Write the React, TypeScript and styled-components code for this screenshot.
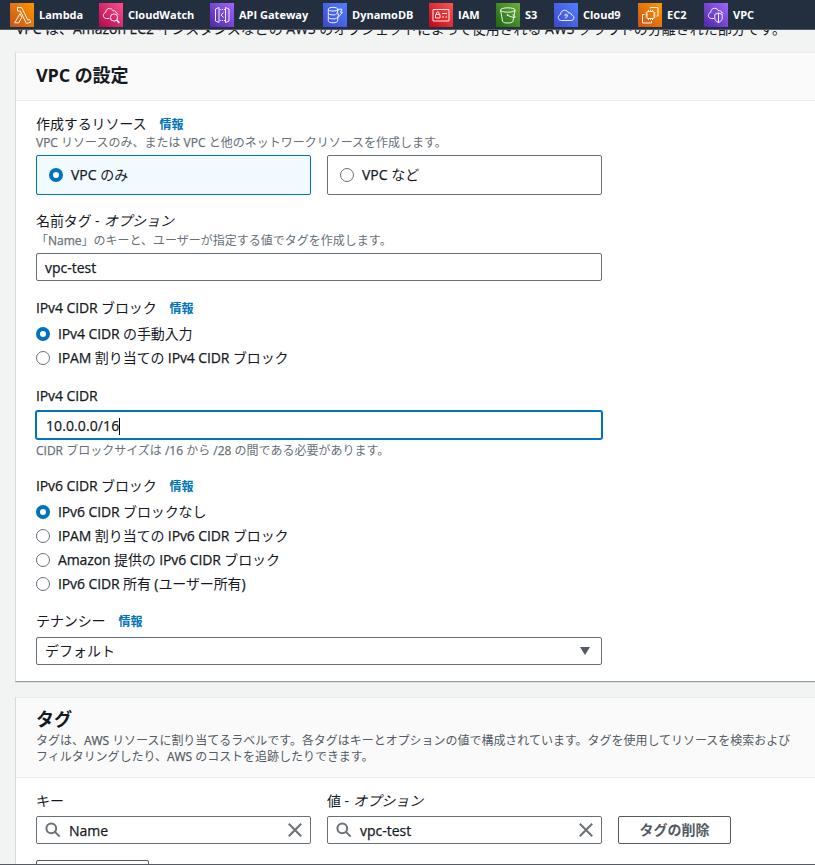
import React from "react";
import styled, { createGlobalStyle } from "styled-components";

const GlobalStyle = createGlobalStyle`
  * { box-sizing: border-box; }
  html, body { margin: 0; padding: 0; height: 100%; overflow: hidden; background: #f2f3f3; }
  body {
    font-family: "Open Sans", "Noto Sans CJK JP", sans-serif;
    font-size: 14px;
    font-weight: 400;
    line-height: 20px;
    letter-spacing: -0.11px;
    color: #16191f;
  }
`;

const Page = styled.div`
  display: flex;
  flex-direction: column;
  height: 865px;
  overflow: hidden;
  border-bottom: 1px solid #545b64;
`;

const ServiceBar = styled.nav`
  display: grid;
  grid-template-columns: 89px 111px 113px 106px 67px 58px 84px 66px 1fr;
  align-items: center;
  flex: none;
  height: 30px;
  padding-left: 10px;
  background: #232f3e;
  border-bottom: 1px solid #545b64;
`;

const Service = styled.a`
  display: flex;
  align-items: center;
  gap: 5px;
  height: 24px;
  color: #fff;
  font-size: 11px;
  font-weight: 700;
  line-height: 16px;
  letter-spacing: 0;
  white-space: nowrap;
`;

const ServiceIcon = styled.svg`
  flex: none;
  width: 24px;
  height: 24px;
  fill: none;
  stroke: #fff;
  stroke-width: 0.9;
  stroke-linejoin: round;
`;

const Content = styled.main`
  display: flex;
  flex-direction: column;
  flex: 1;
  min-height: 0;
  overflow: hidden;
  padding-left: 15px;
`;

const Intro = styled.p`
  flex: none;
  margin: -11px 0 13px 1px;
  height: 20px;
  white-space: nowrap;
  letter-spacing: -0.04px;
`;

const Panel = styled.section`
  flex: none;
  margin-bottom: 15px;
  background: #fff;
  border-left: 1px solid #d5dbdb;
  border-top: 1px solid #eaeded;
  border-bottom: 1px solid #959c9f;
  box-shadow: 0 1px 0 0 rgba(0, 28, 36, 0.08);
`;

const PanelHeader = styled.header<{ $height: number; $top: number }>`
  height: ${(p) => p.$height}px;
  padding: ${(p) => p.$top}px 20px 0;
  background: #fafafa;
  border-bottom: 1px solid #eaeded;
`;

const PanelTitle = styled.h2`
  margin: 0;
  height: 22px;
  font-size: 18px;
  font-weight: 700;
  line-height: 22px;
`;

const PanelText = styled.p`
  margin: 3px 0 0;
  color: #545b64;
  font-size: 12px;
  line-height: 16px;
  letter-spacing: -0.03px;
  white-space: nowrap;
`;

const PanelBody = styled.div`
  padding: 13px 20px 16px;
`;

const Field = styled.div<{ $gap: number }>`
  width: 566px;
  margin-bottom: ${(p) => p.$gap}px;
`;

const Label = styled.div`
  display: flex;
  align-items: center;
  height: 20px;
  white-space: pre;
`;

const LatinRun = styled.span`
  -webkit-text-stroke: 0.25px currentColor;
`;

const Optional = styled.i`
  margin-left: 1px;
  font-style: italic;
  letter-spacing: 0;
`;

const InfoLink = styled.a`
  margin-left: 13px;
  padding-top: 2px;
  color: #0073bb;
  font-size: 12px;
  font-weight: 700;
  letter-spacing: 0;
`;

const Hint = styled.div<{ $top?: number }>`
  height: 16px;
  margin-top: ${(p) => p.$top ?? 0}px;
  padding-top: 1px;
  color: #687078;
  font-size: 12px;
  line-height: 16px;
  letter-spacing: 0;
  white-space: nowrap;
`;

const Tiles = styled.div`
  display: grid;
  grid-template-columns: 1fr 1fr;
  gap: 16px;
  margin-top: 5px;
`;

const Tile = styled.label<{ $selected?: boolean }>`
  display: flex;
  align-items: center;
  gap: 8px;
  height: 40px;
  padding: 0 12px;
  border: 1px solid ${(p) => (p.$selected ? "#0073bb" : "#687078")};
  border-radius: 2px;
  background: ${(p) => (p.$selected ? "#f1faff" : "#fff")};
  letter-spacing: 0;
`;

const RadioDot = styled.span<{ $checked?: boolean }>`
  flex: none;
  width: 14px;
  height: 14px;
  border: ${(p) => (p.$checked ? "4px solid #0073bb" : "1px solid #687078")};
  border-radius: 50%;
  background: #fff;
`;

const RadioList = styled.div`
  display: grid;
  grid-auto-rows: 24px;
  margin-top: 4px;
`;

const RadioRow = styled.label`
  display: flex;
  align-items: center;
  gap: 8px;
`;

const Control = styled.div<{ $top: number; $focused?: boolean }>`
  display: flex;
  align-items: center;
  height: 28px;
  margin-top: ${(p) => p.$top}px;
  padding: 0 8px;
  border: 1px solid ${(p) => (p.$focused ? "#0073bb" : "#687078")};
  border-radius: 2px;
  box-shadow: ${(p) => (p.$focused ? "0 0 0 1px #0073bb" : "none")};
  background: #fff;
  letter-spacing: ${(p) => (p.$focused ? "0.1px" : "0")};
`;

const ControlText = styled.span<{ $drop?: number; $inset?: number }>`
  flex: 1;
  display: flex;
  align-items: center;
  padding-top: ${(p) => p.$drop ?? 0}px;
  padding-left: ${(p) => p.$inset ?? 0}px;
`;

const Caret = styled.span`
  width: 1px;
  height: 17px;
  background: #000;
`;

const Glyph = styled.svg<{ $right?: number }>`
  flex: none;
  margin-right: ${(p) => p.$right ?? 0}px;
  fill: none;
  stroke: #687078;
  stroke-width: 2;
`;

const TagRow = styled.div`
  display: grid;
  grid-template-columns: 275px 275px 113px;
  column-gap: 16px;
  align-items: end;
  margin-bottom: 16px;
`;

const Button = styled.button`
  width: 113px;
  height: 28px;
  padding: 0;
  border: 1px solid #545b64;
  border-radius: 2px;
  background: #fff;
  color: #545b64;
  font: inherit;
  font-weight: 700;
  letter-spacing: 0;
`;

type ServiceInfo = {
  name: string;
  from: string;
  to: string;
  art: React.ReactNode;
};

const ORANGE = ["#c8511b", "#ff9900"];
const PINK = ["#b0084d", "#ff4f8b"];
const PURPLE = ["#4d27a8", "#a166ff"];
const BLUE = ["#3b48cc", "#527fff"];
const RED = ["#bd0816", "#ff5252"];
const GREEN = ["#1b660f", "#6cae3e"];

const service = (name: string, c: string[], art: React.ReactNode): ServiceInfo => ({
  name,
  from: c[0],
  to: c[1],
  art,
});

const services: ServiceInfo[] = [
  service("Lambda", ORANGE, (
    <path d="M7.5 4.5h4.2l6 12.5 1.800-.7 1.200 3-4.300 1.200L10.300 8H7.500zM10 10.700l1.800 3.600-3 5.500H4.600z" />
  )),
  service("CloudWatch", PINK, (
    <>
      <path d="M10.500 15.500H7.600c-2 0-3.200-1.200-3.200-3 0-1.700 1-2.700 2.300-3-.2-2.200 1.500-4 3.700-4 2 0 3.200 1 3.900 2.600 1.500-.8 3 .2 3 2 1 .2 1.700.7 2 1.500" />
      <circle cx="15" cy="14.500" r="3.600" />
      <path d="M17.700 17.200l2.600 2.600" strokeWidth="1.800" />
    </>
  )),
  service("API Gateway", PURPLE, (
    <>
      <path d="M9 4.500L5.500 6v12L9 19.500zM15.500 4.500L19 6v12l-3.500 1.500zM13.500 9.500L11 12l2.500 2.500" />
      <path d="M9.500 6.500h6M9.500 17.500h6" strokeDasharray="1.200 1" />
    </>
  )),
  service("DynamoDB", BLUE, (
    <>
      <ellipse cx="10" cy="6.200" rx="4.700" ry="1.900" />
      <path d="M5.300 6.200v11.600c0 1.100 2.100 2 4.700 2s4.700-.9 4.700-2V15M14.700 6.200v2M5.300 10c0 1.100 2 1.900 4.700 1.900 1 0 1.900-.1 2.700-.4M5.300 14c0 1.100 2 1.900 4.700 1.900 1.500 0 2.800-.2 3.700-.7M15.500 6.200h3.500l-1.500 3h2l-5 6 1.200-4.300h-2z" />
    </>
  )),
  service("IAM", RED, (
    <>
      <rect x="4" y="6.500" width="16" height="11.500" />
      <rect x="6.500" y="11.500" width="4.500" height="3.500" />
      <path d="M7.500 11.500V10c0-1.500 2.500-1.500 2.500 0v1.500M13 10.500h5M13 14h2M16.500 14h1.500" />
    </>
  )),
  service("S3", GREEN, (
    <>
      <ellipse cx="11.800" cy="7" rx="7.300" ry="2.200" />
      <path d="M4.500 7l2.200 11.500c.6 2 9.600 2 10.200 0L19.100 7M11.500 12.200c3 1.500 6 2.500 7.500 2.200 1-.5-1-2-2.500-2.700" />
      <circle cx="11.500" cy="12" r=".5" />
    </>
  )),
  service("Cloud9", BLUE, (
    <>
      <path d="M7.500 17.500c-2 0-3.200-1.200-3.200-3 0-1.600 1-2.600 2.300-3-.2-2.500 1.700-4.300 4-4.300 2 0 3.400 1.100 4 2.900 1.500-.7 2.800.2 3 1.900 1.600.3 2.300 1.300 2.300 2.700 0 1.700-1.200 2.800-3 2.800z" />
      <path d="M13.500 12.200c0 1-3 1-3 0s3-1.800 3 0c0 1.800-.7 2.800-2.700 2.800" strokeWidth=".7" />
    </>
  )),
  service("EC2", ORANGE, (
    <>
      <rect x="9" y="8.500" width="7" height="7" rx=".6" />
      <path d="M10.500 8.500V7M12.500 8.500V7M14.500 8.500V7M10.500 17v-1.500M12.500 17v-1.500M14.500 17v-1.500M9 10H7.500M9 12H7.500M9 14H7.500M17.500 10H16M17.500 12H16M17.500 14H16M6.500 11.500h-2v8.500h9v-2M12.500 5.500v-1h7.500v8.500h-1.500" />
    </>
  )),
  service("VPC", PURPLE, (
    <>
      <path d="M10 15.500H7.700c-2 0-3.300-1.200-3.300-3 0-1.700 1-2.700 2.300-3-.2-2.400 1.600-4.200 3.900-4.200 2 0 3.200 1 3.900 2.600 1.500-.8 2.800.1 3 1.700 1 .2 1.500.6 1.800 1" />
      <path d="M14.500 10l3.700 1.300v3.700c0 2.200-1.500 3.600-3.700 4.500-2.200-.9-3.700-2.300-3.700-4.500v-3.700zM14.500 10v9.500" />
    </>
  )),
];

/* Latin words are drawn slightly heavier than the kana and kanji around them. */
const Mixed = ({ text }: { text: string }) => (
  <span>
    {text.split(/([\x21-\x7e]+)/).map((part, i) =>
      i % 2 ? <LatinRun key={i}>{part}</LatinRun> : part
    )}
  </span>
);

const SearchIcon = () => (
  <Glyph width="16" height="16" viewBox="0 0 16 16" $right={8}>
    <circle cx="6.300" cy="6.300" r="4.900" />
    <path d="M9.900 9.900l4.800 4.700" />
  </Glyph>
);

const ClearIcon = () => (
  <Glyph width="14" height="14" viewBox="0 0 14 14">
    <path d="M.8.8l12.400 12.400M13.200.8L.8 13.200" />
  </Glyph>
);

const Info = () => <InfoLink>情報</InfoLink>;

const Radio = ({ checked, text }: { checked?: boolean; text: string }) => (
  <RadioRow>
    <RadioDot $checked={checked} />
    <Mixed text={text} />
  </RadioRow>
);

const SearchBox = ({ value }: { value: string }) => (
  <Control $top={5}>
    <SearchIcon />
    <ControlText $drop={2}><Mixed text={value} /></ControlText>
    <ClearIcon />
  </Control>
);

export default function App() {
  return (
    <>
      <GlobalStyle />
      <Page>
        <ServiceBar>
          {services.map((s, i) => (
            <Service key={s.name}>
              <ServiceIcon viewBox="0 0 24 24">
                <defs>
                  <linearGradient id={`tile${i}`} x1="0" y1="1" x2="1" y2="0">
                    <stop offset="0" stopColor={s.from} />
                    <stop offset="1" stopColor={s.to} />
                  </linearGradient>
                </defs>
                <rect width="24" height="24" fill={`url(#tile${i})`} stroke="none" />
                {s.art}
              </ServiceIcon>
              {s.name}
            </Service>
          ))}
        </ServiceBar>
        <Content>
          <Intro>
            <Mixed text="VPC は、Amazon EC2 インスタンスなどの AWS のオブジェクトによって使用される AWS クラウドの分離された部分です。" />
          </Intro>

          <Panel>
            <PanelHeader $height={48} $top={11}>
              <PanelTitle>VPC の設定</PanelTitle>
            </PanelHeader>
            <PanelBody>
              <Field $gap={16}>
                <Label>作成するリソース<Info /></Label>
                <Hint><Mixed text="VPC リソースのみ、または VPC と他のネットワークリソースを作成します。" /></Hint>
                <Tiles>
                  <Tile $selected><RadioDot $checked /><Mixed text="VPC のみ" /></Tile>
                  <Tile><RadioDot /><Mixed text="VPC など" /></Tile>
                </Tiles>
              </Field>

              <Field $gap={17}>
                <Label>名前タグ - <Optional>オプション</Optional></Label>
                <Hint $top={1}><Mixed text="「Name」のキーと、ユーザーが指定する値でタグを作成します。" /></Hint>
                <Control $top={5}><ControlText $drop={2}><Mixed text="vpc-test" /></ControlText></Control>
              </Field>

              <Field $gap={16}>
                <Label><Mixed text="IPv4 CIDR ブロック" /><Info /></Label>
                <RadioList>
                  <Radio checked text="IPv4 CIDR の手動入力" />
                  <Radio text="IPAM 割り当ての IPv4 CIDR ブロック" />
                </RadioList>
              </Field>

              <Field $gap={18}>
                <Label><Mixed text="IPv4 CIDR" /></Label>
                <Control $top={5} $focused>
                  <ControlText $drop={2} $inset={1}><Mixed text="10.0.0.0/16" /><Caret /></ControlText>
                </Control>
                <Hint $top={3}><Mixed text="CIDR ブロックサイズは /16 から /28 の間である必要があります。" /></Hint>
              </Field>

              <Field $gap={15}>
                <Label><Mixed text="IPv6 CIDR ブロック" /><Info /></Label>
                <RadioList>
                  <Radio checked text="IPv6 CIDR ブロックなし" />
                  <Radio text="IPAM 割り当ての IPv6 CIDR ブロック" />
                  <Radio text="Amazon 提供の IPv6 CIDR ブロック" />
                  <Radio text="IPv6 CIDR 所有 (ユーザー所有)" />
                </RadioList>
              </Field>

              <Field $gap={0}>
                <Label>テナンシー<Info /></Label>
                <Control $top={6}>
                  <ControlText>デフォルト</ControlText>
                  <Glyph width="10" height="8" viewBox="0 0 10 8" $right={3}>
                    <path d="M0 0h10L5 8z" fill="#545b64" stroke="none" />
                  </Glyph>
                </Control>
              </Field>
            </PanelBody>
          </Panel>

          <Panel>
            <PanelHeader $height={80} $top={10}>
              <PanelTitle>タグ</PanelTitle>
              <PanelText>
                <Mixed text="タグは、AWS リソースに割り当てるラベルです。各タグはキーとオプションの値で構成されています。タグを使用してリソースを検索および" />
                <br />
                <Mixed text="フィルタリングしたり、AWS のコストを追跡したりできます。" />
              </PanelText>
            </PanelHeader>
            <PanelBody>
              <TagRow>
                <div>
                  <Label>キー</Label>
                  <SearchBox value="Name" />
                </div>
                <div>
                  <Label>値 - <Optional>オプション</Optional></Label>
                  <SearchBox value="vpc-test" />
                </div>
                <Button>タグの削除</Button>
              </TagRow>
              <Button aria-label="タグの追加" />
            </PanelBody>
          </Panel>
        </Content>
      </Page>
    </>
  );
}
